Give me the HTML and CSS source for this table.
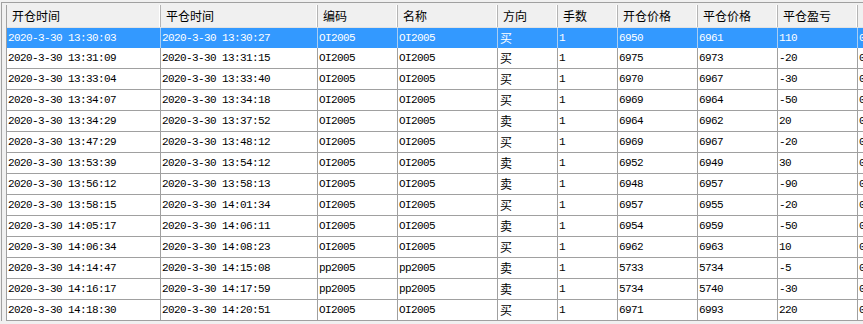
FILE: index.html
```html
<!DOCTYPE html>
<html lang="zh-CN">
<head>
  <meta charset="UTF-8">
  <title>平仓记录</title>
  <link rel="stylesheet" href="styles.css">
</head>
<body>
  <div class="frame">
    <div class="grid">
      <div class="row head">
        <div class="cell">开仓时间</div><div class="cell">平仓时间</div><div class="cell">编码</div><div class="cell">名称</div><div class="cell">方向</div><div class="cell">手数</div><div class="cell">开仓价格</div><div class="cell">平仓价格</div><div class="cell">平仓盈亏</div><div class="cell">手续费</div>
      </div>
      <div class="row selected">
        <div class="cell">2020-3-30 13:30:03</div><div class="cell">2020-3-30 13:30:27</div><div class="cell">OI2005</div><div class="cell">OI2005</div><div class="cell cn">买</div><div class="cell">1</div><div class="cell">6950</div><div class="cell">6961</div><div class="cell">110</div><div class="cell">0</div>
      </div>
      <div class="row">
        <div class="cell">2020-3-30 13:31:09</div><div class="cell">2020-3-30 13:31:15</div><div class="cell">OI2005</div><div class="cell">OI2005</div><div class="cell cn">买</div><div class="cell">1</div><div class="cell">6975</div><div class="cell">6973</div><div class="cell">-20</div><div class="cell">0</div>
      </div>
      <div class="row">
        <div class="cell">2020-3-30 13:33:04</div><div class="cell">2020-3-30 13:33:40</div><div class="cell">OI2005</div><div class="cell">OI2005</div><div class="cell cn">买</div><div class="cell">1</div><div class="cell">6970</div><div class="cell">6967</div><div class="cell">-30</div><div class="cell">0</div>
      </div>
      <div class="row">
        <div class="cell">2020-3-30 13:34:07</div><div class="cell">2020-3-30 13:34:18</div><div class="cell">OI2005</div><div class="cell">OI2005</div><div class="cell cn">买</div><div class="cell">1</div><div class="cell">6969</div><div class="cell">6964</div><div class="cell">-50</div><div class="cell">0</div>
      </div>
      <div class="row">
        <div class="cell">2020-3-30 13:34:29</div><div class="cell">2020-3-30 13:37:52</div><div class="cell">OI2005</div><div class="cell">OI2005</div><div class="cell cn">卖</div><div class="cell">1</div><div class="cell">6964</div><div class="cell">6962</div><div class="cell">20</div><div class="cell">0</div>
      </div>
      <div class="row">
        <div class="cell">2020-3-30 13:47:29</div><div class="cell">2020-3-30 13:48:12</div><div class="cell">OI2005</div><div class="cell">OI2005</div><div class="cell cn">买</div><div class="cell">1</div><div class="cell">6969</div><div class="cell">6967</div><div class="cell">-20</div><div class="cell">0</div>
      </div>
      <div class="row">
        <div class="cell">2020-3-30 13:53:39</div><div class="cell">2020-3-30 13:54:12</div><div class="cell">OI2005</div><div class="cell">OI2005</div><div class="cell cn">卖</div><div class="cell">1</div><div class="cell">6952</div><div class="cell">6949</div><div class="cell">30</div><div class="cell">0</div>
      </div>
      <div class="row">
        <div class="cell">2020-3-30 13:56:12</div><div class="cell">2020-3-30 13:58:13</div><div class="cell">OI2005</div><div class="cell">OI2005</div><div class="cell cn">卖</div><div class="cell">1</div><div class="cell">6948</div><div class="cell">6957</div><div class="cell">-90</div><div class="cell">0</div>
      </div>
      <div class="row">
        <div class="cell">2020-3-30 13:58:15</div><div class="cell">2020-3-30 14:01:34</div><div class="cell">OI2005</div><div class="cell">OI2005</div><div class="cell cn">买</div><div class="cell">1</div><div class="cell">6957</div><div class="cell">6955</div><div class="cell">-20</div><div class="cell">0</div>
      </div>
      <div class="row">
        <div class="cell">2020-3-30 14:05:17</div><div class="cell">2020-3-30 14:06:11</div><div class="cell">OI2005</div><div class="cell">OI2005</div><div class="cell cn">卖</div><div class="cell">1</div><div class="cell">6954</div><div class="cell">6959</div><div class="cell">-50</div><div class="cell">0</div>
      </div>
      <div class="row">
        <div class="cell">2020-3-30 14:06:34</div><div class="cell">2020-3-30 14:08:23</div><div class="cell">OI2005</div><div class="cell">OI2005</div><div class="cell cn">买</div><div class="cell">1</div><div class="cell">6962</div><div class="cell">6963</div><div class="cell">10</div><div class="cell">0</div>
      </div>
      <div class="row">
        <div class="cell">2020-3-30 14:14:47</div><div class="cell">2020-3-30 14:15:08</div><div class="cell">pp2005</div><div class="cell">pp2005</div><div class="cell cn">卖</div><div class="cell">1</div><div class="cell">5733</div><div class="cell">5734</div><div class="cell">-5</div><div class="cell">0</div>
      </div>
      <div class="row">
        <div class="cell">2020-3-30 14:16:17</div><div class="cell">2020-3-30 14:17:59</div><div class="cell">pp2005</div><div class="cell">pp2005</div><div class="cell cn">卖</div><div class="cell">1</div><div class="cell">5734</div><div class="cell">5740</div><div class="cell">-30</div><div class="cell">0</div>
      </div>
      <div class="row">
        <div class="cell">2020-3-30 14:18:30</div><div class="cell">2020-3-30 14:20:51</div><div class="cell">OI2005</div><div class="cell">OI2005</div><div class="cell cn">买</div><div class="cell">1</div><div class="cell">6971</div><div class="cell">6993</div><div class="cell">220</div><div class="cell">0</div>
      </div>
    </div>
  </div>
</body>
</html>
```

FILE: styles.css
```css
* {
  margin: 0;
  padding: 0;
  box-sizing: border-box;
}

body {
  background-color: #f0f0f0;
  overflow: hidden;
  font-family: "Liberation Mono", "Noto Sans CJK SC", monospace;
  color: #000;
}

.frame {
  margin: 2px 0 0 1px;
  border-top: 1px solid #a0a0a0;
  border-left: 1px solid #a0a0a0;
  padding: 2px 0 0 4px;
  background-color: #f0f0f0;
}

.grid {
  border-left: 1px solid #a0a0a0;
  background-color: #fff;
  width: 932px;
}

.row {
  display: grid;
  grid-template-columns: 154px 157px 80px 100px 60px 60px 80px 80px 80px 80px;
  height: 21px;
  border-bottom: 1px solid #a0a0a0;
}

.cell {
  border-right: 1px solid #a0a0a0;
  padding-left: 1px;
  font-size: 11px;
  letter-spacing: -0.6px;
  line-height: 20px;
  white-space: nowrap;
  overflow: hidden;
}

.cell.cn {
  font-family: "Noto Sans CJK SC", sans-serif;
  font-size: 12px;
  letter-spacing: 0;
  padding-left: 2px;
}

/* header */
.head {
  height: 23px;
  background-color: #f0f0f0;
  border-bottom: 1px solid #e3e3e3;
}

.head .cell {
  font-family: "Noto Sans CJK SC", sans-serif;
  font-size: 12px;
  letter-spacing: 0;
  line-height: 22px;
  padding-left: 5px;
  border-right: 1px solid #b4b4b4;
  box-shadow: inset -1px 0 0 #fff;
}

.selected {
  background-color: #3399ff;
  color: #fff;
  border-bottom: none;
  height: 20px;
}

.selected .cell {
  border-right-color: #a9cdf3;
}
```
